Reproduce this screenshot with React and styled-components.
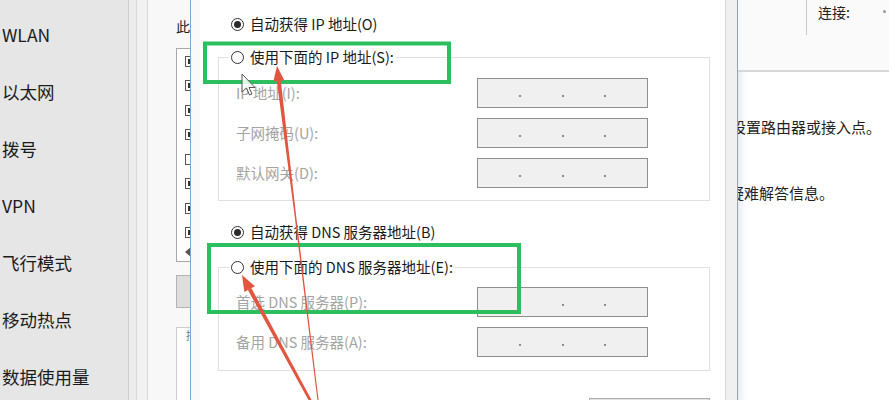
import React from "react";
import styled, { createGlobalStyle } from "styled-components";

const GlobalStyle = createGlobalStyle`
  *, *::before, *::after { box-sizing: border-box; }
  html, body { margin: 0; padding: 0; background: #fff; }
  body { font-family: "Noto Sans CJK SC", "Noto Sans", sans-serif; }
`;

const Page = styled.div`
  position: relative;
  width: 889px;
  height: 400px;
  overflow: hidden;
  display: flex;
  font-family: "Noto Sans CJK SC", "Noto Sans", sans-serif;
  color: #1a1a1a;
`;

/* ---------- left navigation ---------- */
const NavPanel = styled.nav`
  flex: none;
  width: 129px;
  height: 100%;
  background: #e6e6e6;
  border-right: 1px solid #cfcfcf;
  padding-top: 6px;
`;

const NavItem = styled.div`
  height: 57px;
  display: flex;
  align-items: center;
  padding-left: 2px;
  font-size: 17.5px;
  line-height: 1;
  color: #1b1b1b;
  white-space: nowrap;
`;

const FrameStrip = styled.div`
  flex: none;
  width: 19px;
  height: 100%;
  background: linear-gradient(
    to right,
    #ececec 0 7px,
    #d8d8d8 7px 8px,
    #f2f2f2 8px
  );
  border-right: 1px solid #d9d9d9;
`;

/* ---------- dialog behind ---------- */
const BackDialog = styled.div`
  flex: none;
  width: 42px;
  height: 100%;
  overflow: hidden;
  background: #f8f8f8;
  padding: 16px 0 0 28px;
  display: flex;
  flex-direction: column;
`;

const BackTitle = styled.div`
  font-size: 14px;
  line-height: 20px;
  white-space: nowrap;
  color: #222;
`;

const ListBox = styled.div`
  flex: none;
  width: 90px;
  height: 214px;
  margin-top: 12px;
  background: #fff;
  border: 1px solid #a9a9a9;
  padding: 0 0 0 8px;
  display: flex;
  flex-direction: column;
`;

const ListRow = styled.div`
  height: ${(p) => p.$h || 24.5}px;
  display: flex;
  align-items: center;
  flex: none;
`;

const CheckBox = styled.span`
  width: 11px;
  height: 11px;
  border: 1px solid #555;
  background: #fff;
  display: grid;
  place-items: center;
  &::after {
    content: "";
    width: 5px;
    height: 5px;
    background: ${(p) => (p.$on ? "#333" : "transparent")};
  }
`;

const ScrollArrow = styled.span`
  width: 0;
  height: 0;
  border-top: 5px solid transparent;
  border-bottom: 5px solid transparent;
  border-right: 6px solid #555;
`;

const BackButton = styled.div`
  flex: none;
  width: 90px;
  height: 33px;
  margin-top: 13px;
  background: #dedede;
  border: 1px solid #b3b3b3;
`;

const DescBox = styled.div`
  flex: none;
  width: 90px;
  height: 100px;
  margin-top: 19px;
  background: #fff;
  border: 1px solid #cdcdcd;
  padding: 0 0 0 9px;
  font-size: 11px;
  line-height: 14px;
  color: #777;
  white-space: nowrap;
`;

/* ---------- front dialog ---------- */
const FrontDialog = styled.div`
  flex: none;
  width: 548px;
  height: 100%;
  display: flex;
  background: #f9f9f9;
  border-left: 1px solid #79a6dc;
  border-right: 1px solid #79a6dc;
  padding-left: 9px;
`;

const DialogBody = styled.div`
  flex: none;
  width: 526px;
  height: 100%;
  background: #fff;
  border-right: 1px solid #dadada;
  padding: 14px 15px 0 18px;
  display: flex;
  flex-direction: column;
`;

const FrameRight = styled.div`
  flex: none;
  width: 11px;
  height: 100%;
  background: #f0f0f0;
`;

const RadioRow = styled.div`
  flex: none;
  height: 20px;
  display: flex;
  align-items: center;
  gap: 6px;
  margin: ${(p) => p.$top || 0}px 0 0 13px;
  font-size: 14.5px;
  line-height: 20px;
  white-space: nowrap;
  color: #1a1a1a;
`;

const Radio = styled.span`
  flex: none;
  width: 13px;
  height: 13px;
  border-radius: 50%;
  border: 1px solid #333;
  background: #fff;
  display: grid;
  place-items: center;
  &::after {
    content: "";
    width: 7px;
    height: 7px;
    border-radius: 50%;
    background: ${(p) => (p.$checked ? "#2b2b2b" : "transparent")};
  }
`;

const GroupBox = styled.fieldset`
  flex: none;
  margin: ${(p) => p.$top}px 0 0 0;
  padding: ${(p) => p.$padTop}px 61px ${(p) => p.$padBottom}px 10px;
  border: 1px solid #e0e0e0;
  min-width: 0;
`;

const GroupLegend = styled.legend`
  padding: 0 2px;
  height: 20px;
  display: flex;
  align-items: center;
  gap: 6px;
  font-size: 14.5px;
  line-height: 20px;
  white-space: nowrap;
  color: #1a1a1a;
`;

const FieldGrid = styled.div`
  display: grid;
  grid-template-columns: 1fr 171px;
  grid-auto-rows: 30px;
  row-gap: 10px;
  align-items: center;
  margin-left: 7px;
`;

const FieldLabel = styled.span`
  font-size: 14.5px;
  line-height: 20px;
  color: #a4a4a4;
  white-space: nowrap;
`;

const IpBox = styled.div`
  height: 30px;
  display: flex;
  align-items: center;
  background: #f0f0f0;
  border: 1px solid #8e8e8e;
`;

const Octet = styled.span`
  flex: 1;
`;

const IpDot = styled.span`
  flex: none;
  width: 2px;
  height: 2px;
  margin-top: 5px;
  background: #8c8c8c;
`;

const ButtonBar = styled.div`
  flex: none;
  display: flex;
  justify-content: flex-end;
  margin-top: 27px;
`;

const DialogButton = styled.div`
  width: 121px;
  height: 23px;
  background: #e1e1e1;
  border: 1px solid #adadad;
`;

/* ---------- settings window on the right ---------- */
const RightPanel = styled.div`
  flex: 1;
  height: 100%;
  background: #fff;
  box-shadow: inset 9px 0 8px -7px rgba(0, 0, 0, 0.12);
  display: flex;
  flex-direction: column;
  overflow: hidden;
`;

const TopStrip = styled.div`
  flex: none;
  height: 72px;
  background: #fafafa;
  border-bottom: 2px solid #d7d7d7;
  display: flex;
  align-items: flex-start;
`;

const StatusCell = styled.div`
  flex: none;
  width: 69px;
  height: 35px;
  border-right: 1px solid #c9c9c9;
`;

const ConnLabel = styled.div`
  margin-left: 11px;
  font-size: 14px;
  line-height: 24px;
  color: #222;
  white-space: nowrap;
`;

const ConnDot = styled.span`
  width: 3px;
  height: 3px;
  border-radius: 50%;
  background: #9a9a9a;
  margin: 10px 3px 0 auto;
`;

const InfoLine = styled.div`
  flex: none;
  margin-top: ${(p) => p.$top}px;
  margin-left: ${(p) => -p.$hidden}px;
  font-size: 15px;
  line-height: 20px;
  color: #1f1f1f;
  white-space: nowrap;
`;

/* ---------- annotation overlay ---------- */
const Overlay = styled.svg`
  position: absolute;
  left: 0;
  top: 0;
  width: 889px;
  height: 400px;
  pointer-events: none;
`;

const ipRows = [
  { label: "IP 地址(I):" },
  { label: "子网掩码(U):" },
  { label: "默认网关(D):" },
];

const dnsRows = [
  { label: "首选 DNS 服务器(P):" },
  { label: "备用 DNS 服务器(A):" },
];

const navItems = ["WLAN", "以太网", "拨号", "VPN", "飞行模式", "移动热点", "数据使用量"];
const checks = [true, true, true, true, false, true, true, true];

function IpField() {
  return (
    <IpBox>
      <Octet />
      <IpDot />
      <Octet />
      <IpDot />
      <Octet />
      <IpDot />
      <Octet />
    </IpBox>
  );
}

function Fields({ rows }) {
  return (
    <FieldGrid>
      {rows.map((r) => (
        <React.Fragment key={r.label}>
          <FieldLabel>{r.label}</FieldLabel>
          <IpField />
        </React.Fragment>
      ))}
    </FieldGrid>
  );
}

export default function App() {
  return (
    <>
      <GlobalStyle />
      <Page>
        <NavPanel>
          {navItems.map((n) => (
            <NavItem key={n}>{n}</NavItem>
          ))}
        </NavPanel>
        <FrameStrip />
        <BackDialog>
          <BackTitle>此</BackTitle>
          <ListBox>
            {checks.map((c, i) => (
              <ListRow key={i}>
                <CheckBox $on={c} />
              </ListRow>
            ))}
            <ListRow $h={14}>
              <ScrollArrow />
            </ListRow>
          </ListBox>
          <BackButton />
          <DescBox>描</DescBox>
        </BackDialog>

        <FrontDialog>
          <DialogBody>
            <RadioRow>
              <Radio $checked />
              自动获得 IP 地址(O)
            </RadioRow>
            <GroupBox $top={13} $padTop={11} $padBottom={12}>
              <GroupLegend>
                <Radio />
                使用下面的 IP 地址(S):
              </GroupLegend>
              <Fields rows={ipRows} />
            </GroupBox>

            <RadioRow $top={21}>
              <Radio $checked />
              自动获得 DNS 服务器地址(B)
            </RadioRow>
            <GroupBox $top={15} $padTop={10} $padBottom={13}>
              <GroupLegend>
                <Radio />
                使用下面的 DNS 服务器地址(E):
              </GroupLegend>
              <Fields rows={dnsRows} />
            </GroupBox>

            <ButtonBar>
              <DialogButton />
            </ButtonBar>
          </DialogBody>
          <FrameRight />
        </FrontDialog>

        <RightPanel>
          <TopStrip>
            <StatusCell />
            <ConnLabel>连接:</ConnLabel>
            <ConnDot />
          </TopStrip>
          <InfoLine $top={45} $hidden={7}>设置路由器或接入点。</InfoLine>
          <InfoLine $top={46} $hidden={9}>疑难解答信息。</InfoLine>
        </RightPanel>

        <Overlay viewBox="0 0 889 400">
          <rect x="205" y="43.5" width="244" height="38.5" fill="none" stroke="#2cbe5f" strokeWidth="4" />
          <rect x="209" y="245" width="310" height="67" fill="none" stroke="#2cbe5f" strokeWidth="4" />

          <path
            d="M242 74 L242 92 L246.5 88 L249.5 95 L252 94 L249 87.5 L255 87.5 Z"
            fill="#ffffff"
            fillOpacity="0.85"
            stroke="#555"
            strokeWidth="1"
            strokeLinejoin="round"
          />

          <polygon
            points="280.82,80.65 296.01,214.81 320.45,415.33 319.35,415.47 294.53,214.99 276.84,81.13"
            fill="#e2553f"
          />
          <polygon points="277,66 284.29,80.22 273.37,81.56" fill="#e2553f" />

          <polygon points="251.41,288.09 319.6,414.9 317.32,416.12 247.89,290.01" fill="#e2553f" />
          <polygon points="242,275 254.92,286.18 244.38,291.92" fill="#e2553f" />
        </Overlay>
      </Page>
    </>
  );
}
